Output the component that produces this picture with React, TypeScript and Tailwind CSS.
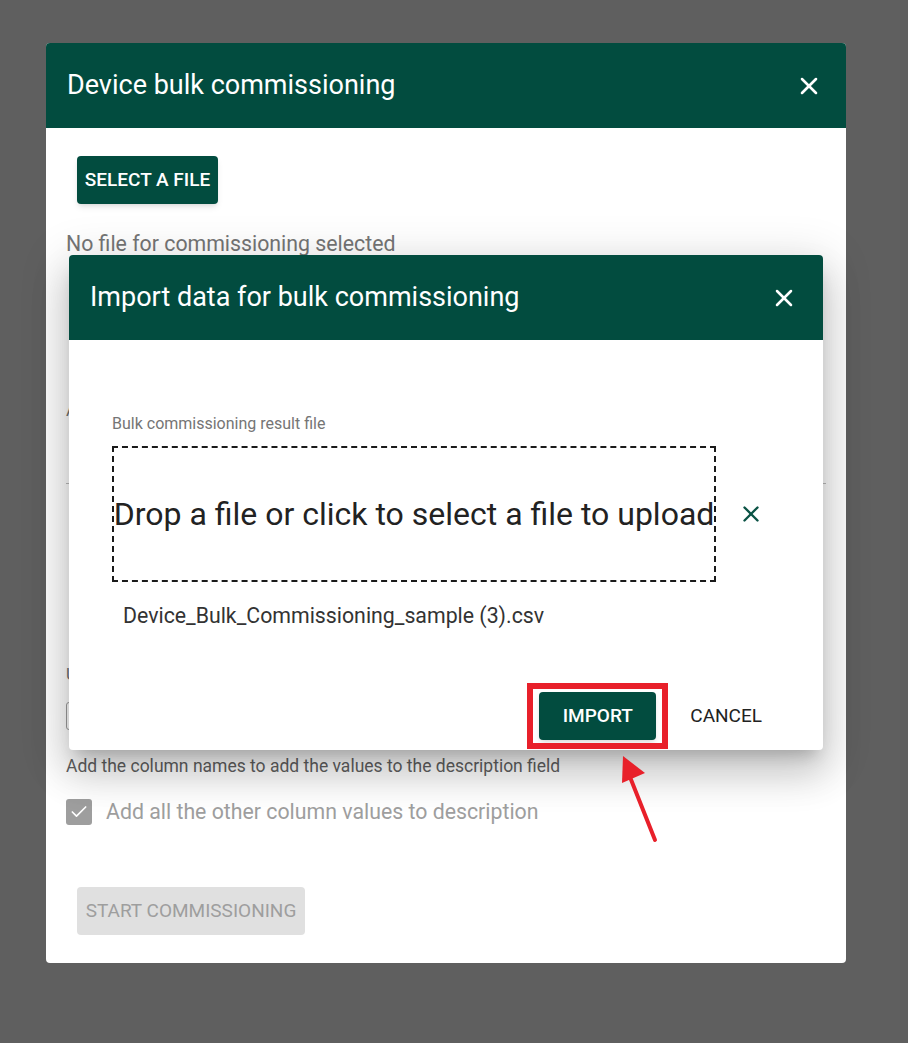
import { X, Check } from 'lucide-react';

const GREEN = 'bg-[#024c3f]';

const ImportDialog = () => {
  return (
    <div className="absolute left-[23px] top-[212px] w-[754px] h-[495px] bg-white rounded-[4px] shadow-[0_11px_15px_-7px_rgba(0,0,0,0.2),0_24px_38px_3px_rgba(0,0,0,0.14),0_9px_46px_8px_rgba(0,0,0,0.12)]">
      <div className={`${GREEN} h-[85px] rounded-t-[4px] flex items-center justify-between pl-[21px] pr-[25px]`}>
        <h2 className="text-white text-[27px] font-normal">Import data for bulk commissioning</h2>
        <X className="text-white w-[28px] h-[28px]" strokeWidth={2.2} />
      </div>

      <div className="pl-[43px] pt-[73px]">
        <div className="text-[16px] leading-[22px] text-[#757575]">Bulk commissioning result file</div>

        <div className="flex items-center mt-[11px]">
          <div className="w-[604px] h-[136px] border-2 border-dashed border-[#1a1a1a] flex items-center justify-center">
            <span className="text-[32px] text-[#222] whitespace-nowrap">
              Drop a file or click to select a file to upload
            </span>
          </div>
          <X className="ml-[22px] w-[26px] h-[26px] text-[#0b5345]" strokeWidth={2.2} />
        </div>

        <div className="mt-[22px] ml-[11px] text-[21.3px] leading-[24px] text-[#333]">
          Device_Bulk_Commissioning_sample (3).csv
        </div>
      </div>

      <div className="flex justify-end items-center gap-[18px] pr-[45px] mt-[64px]">
        <div className="relative">
          <button className={`${GREEN} h-[48px] w-[117px] rounded-[4px] text-white text-[19px] font-medium shadow-md`}>
            IMPORT
          </button>
          <div className="absolute left-[-12px] top-[-9px] w-[141px] h-[66px] border-[6px] border-[#e8202a] pointer-events-none" />
        </div>
        <button className="h-[48px] px-4 text-[19px] font-normal text-[#222]">CANCEL</button>
      </div>
    </div>
  );
};

export default function App() {
  return (
    <div className="relative min-h-[1043px] bg-[#5f5f5f] pt-[43px] pl-[46px] font-['Roboto',sans-serif]">
      <div className="relative w-[800px] h-[920px] bg-white rounded-[4px]">
        <div className={`${GREEN} h-[85px] rounded-t-[4px] flex items-center justify-between pl-[21px] pr-[23px]`}>
          <h1 className="text-white text-[27px] font-normal">Device bulk commissioning</h1>
          <X className="text-white w-[28px] h-[28px]" strokeWidth={2.2} />
        </div>

        <div className="px-5 pt-[28px]">
          <button className={`${GREEN} ml-[11px] h-[48px] w-[141px] rounded-[4px] text-white text-[19px] font-medium shadow-md`}>
            SELECT A FILE
          </button>

          <div className="mt-[28px] text-[21.3px] leading-[24px] text-[#757575]">No file for commissioning selected</div>

          <div className="mt-[144px] text-[17px] leading-[20px] text-[#757575]">Assign devices to a group</div>
          <div className="h-[64px] border-b border-[#bdbdbd]" />

          <div className="mt-[180px] text-[17px] leading-[20px] text-[#757575]">Use column for description</div>
          <div className="mt-[18px] h-[28px] w-[300px] border border-[#9e9e9e] rounded-[3px]" />

          <div className="mt-[26px] text-[17.5px] leading-[20px] text-[#616161]">
            Add the column names to add the values to the description field
          </div>

          <div className="mt-[20px] flex items-center gap-[14px]">
            <div className="w-[26px] h-[26px] rounded-[3px] bg-[#9e9e9e] flex items-center justify-center">
              <Check className="text-white w-[20px] h-[20px]" strokeWidth={2} />
            </div>
            <span className="text-[21.3px] text-[#9e9e9e]">Add all the other column values to description</span>
          </div>

          <button className="mt-[59px] ml-[11px] h-[48px] w-[228px] rounded-[4px] bg-[#e0e0e0] text-[19px] font-normal text-[#9e9e9e]">
            START COMMISSIONING
          </button>
        </div>

        <ImportDialog />
      </div>

      <svg className="absolute left-[600px] top-[740px] pointer-events-none" width="80" height="110" viewBox="0 0 80 110">
        <line x1="55" y1="100" x2="28" y2="32" stroke="#e8202a" strokeWidth="4" strokeLinecap="round" />
        <polygon points="23,16 22,43 45,33" fill="#e8202a" />
      </svg>
    </div>
  );
}
